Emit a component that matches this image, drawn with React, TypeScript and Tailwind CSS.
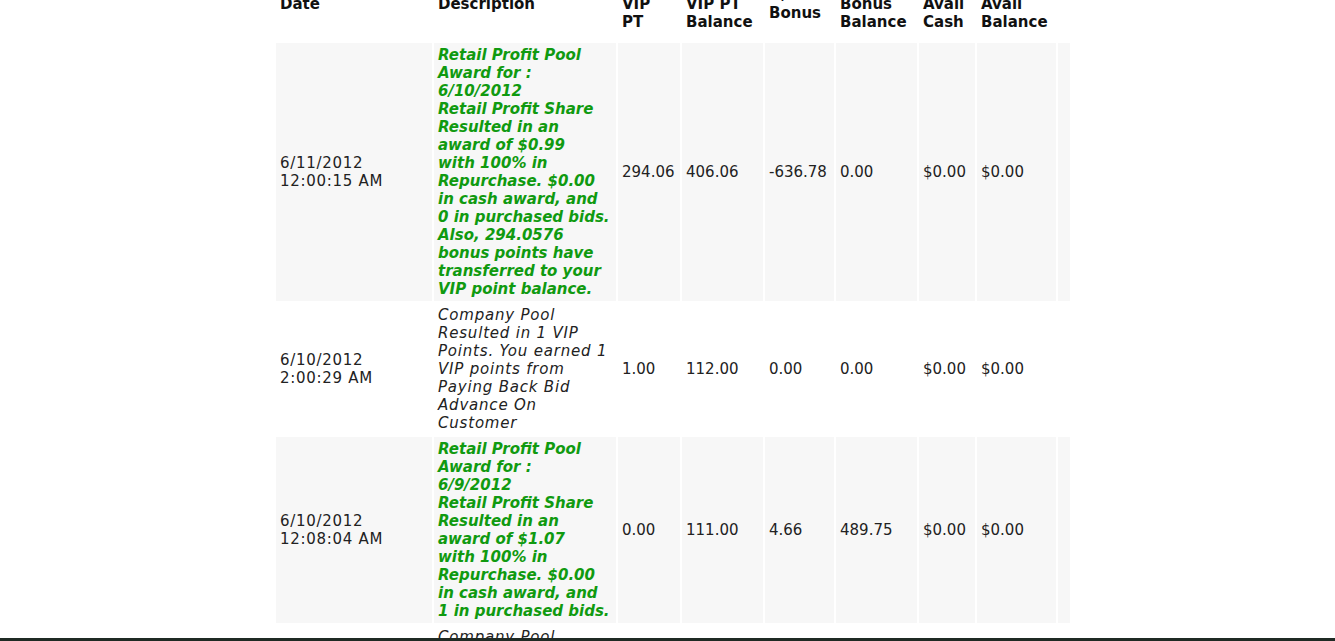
import React from "react";

type Row = {
  date: string;
  time: string;
  lines: string[];
  green: boolean;
  vip: string;
  vipBal: string;
  bonus: string;
  bonusBal: string;
  cash: string;
  bal: string;
};

const companyPool = [
  "Company Pool",
  "Resulted in 1 VIP",
  "Points. You earned 1",
  "VIP points from",
  "Paying Back Bid",
  "Advance On",
  "Customer",
];

const rows: Row[] = [
  {
    date: "6/11/2012",
    time: "12:00:15 AM",
    green: true,
    lines: [
      "Retail Profit Pool",
      "Award for :",
      "6/10/2012",
      "Retail Profit Share",
      "Resulted in an",
      "award of $0.99",
      "with 100% in",
      "Repurchase. $0.00",
      "in cash award, and",
      "0 in purchased bids.",
      "Also, 294.0576",
      "bonus points have",
      "transferred to your",
      "VIP point balance.",
    ],
    vip: "294.06",
    vipBal: "406.06",
    bonus: "-636.78",
    bonusBal: "0.00",
    cash: "$0.00",
    bal: "$0.00",
  },
  {
    date: "6/10/2012",
    time: "2:00:29 AM",
    green: false,
    lines: companyPool,
    vip: "1.00",
    vipBal: "112.00",
    bonus: "0.00",
    bonusBal: "0.00",
    cash: "$0.00",
    bal: "$0.00",
  },
  {
    date: "6/10/2012",
    time: "12:08:04 AM",
    green: true,
    lines: [
      "Retail Profit Pool",
      "Award for :",
      "6/9/2012",
      "Retail Profit Share",
      "Resulted in an",
      "award of $1.07",
      "with 100% in",
      "Repurchase. $0.00",
      "in cash award, and",
      "1 in purchased bids.",
    ],
    vip: "0.00",
    vipBal: "111.00",
    bonus: "4.66",
    bonusBal: "489.75",
    cash: "$0.00",
    bal: "$0.00",
  },
  {
    date: "6/9/2012",
    time: "2:00:31 AM",
    green: false,
    lines: companyPool,
    vip: "1.00",
    vipBal: "111.00",
    bonus: "0.00",
    bonusBal: "485.09",
    cash: "$0.00",
    bal: "$0.00",
  },
];

export default function App() {
  const td = "px-1 py-[3px] align-middle";
  return (
    <div className="min-h-screen bg-white font-['DejaVu_Sans',Verdana,sans-serif] text-[15px] leading-[18px] text-[#222]">
      <div className="pl-[274px] mt-[-35px]">
        <table className="table-fixed border-separate border-spacing-[2px] w-[798px]">
          <colgroup>
            <col className="w-[156px]" />
            <col className="w-[182px]" />
            <col className="w-[62px]" />
            <col className="w-[81px]" />
            <col className="w-[69px]" />
            <col className="w-[81px]" />
            <col className="w-[56px]" />
            <col className="w-[79px]" />
            <col className="w-[12px]" />
          </colgroup>
          <thead>
            <tr className="text-left font-bold text-[#111]">
              <th className="px-1 py-[10px] align-middle font-bold">Date</th>
              <th className="px-1 py-[10px] align-middle font-bold">Description</th>
              <th className="px-1 pt-[28px] pb-[10px] align-middle font-bold">VIP PT</th>
              <th className="px-1 pt-[28px] pb-[10px] align-middle font-bold">VIP PT Balance</th>
              <th className="px-1 py-[10px] align-middle font-bold">+/- Bonus</th>
              <th className="px-1 pt-[28px] pb-[10px] align-middle font-bold">Bonus Balance</th>
              <th className="px-1 pt-[28px] pb-[10px] align-middle font-bold">Avail Cash</th>
              <th className="px-1 pt-[28px] pb-[10px] align-middle font-bold">Avail Balance</th>
              <th className="p-0"></th>
            </tr>
          </thead>
          <tbody>
            {rows.map((r, i) => {
              const bg = i % 2 === 0 ? "bg-[#f7f7f7]" : "bg-white";
              return (
                <tr key={i}>
                  <td className={`${td} ${bg} tracking-[0.7px]`}>
                    <div>{r.date}</div>
                    <div>{r.time}</div>
                  </td>
                  <td
                    className={`${td} ${bg} whitespace-nowrap ${
                      r.green
                        ? "font-bold italic text-[#109a10]"
                        : "italic tracking-[0.8px]"
                    }`}
                  >
                    {r.lines.map((l, j) => (
                      <div key={j}>{l}</div>
                    ))}
                  </td>
                  <td className={`${td} ${bg}`}>{r.vip}</td>
                  <td className={`${td} ${bg}`}>{r.vipBal}</td>
                  <td className={`${td} ${bg}`}>{r.bonus}</td>
                  <td className={`${td} ${bg}`}>{r.bonusBal}</td>
                  <td className={`${td} ${bg}`}>{r.cash}</td>
                  <td className={`${td} ${bg}`}>{r.bal}</td>
                  <td className={`p-0 ${bg}`}></td>
                </tr>
              );
            })}
          </tbody>
        </table>
      </div>
      <div className="fixed bottom-0 left-0 right-0 h-[3px] bg-[#1f2a24]" />
    </div>
  );
}
